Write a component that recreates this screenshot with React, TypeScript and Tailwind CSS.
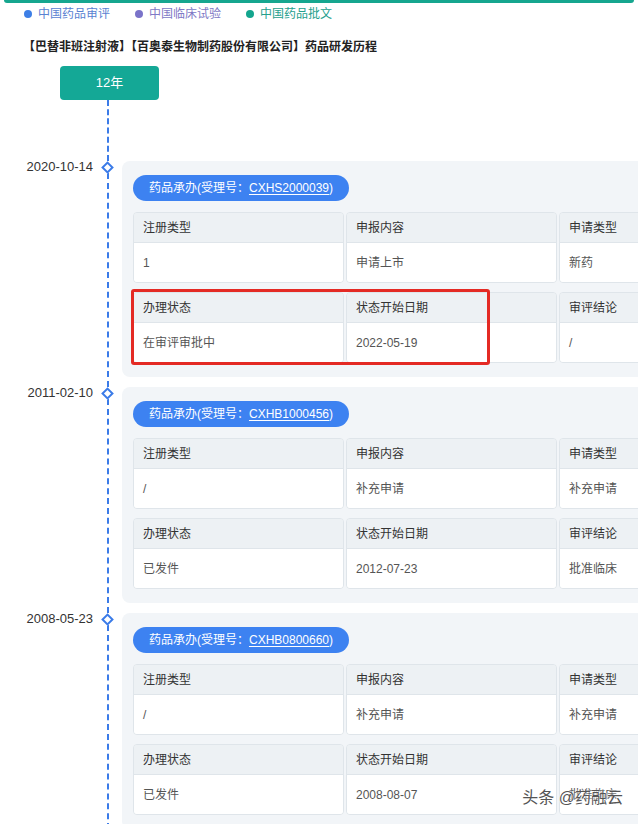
import React from 'react';

type Record = {
  date: string;
  code: string;
  row1: [string, string][];
  row2: [string, string][];
  highlight?: boolean;
};

const records: Record[] = [
  {
    date: '2020-10-14',
    code: 'CXHS2000039',
    row1: [
      ['注册类型', '1'],
      ['申报内容', '申请上市'],
      ['申请类型', '新药'],
    ],
    row2: [
      ['办理状态', '在审评审批中'],
      ['状态开始日期', '2022-05-19'],
      ['审评结论', '/'],
    ],
    highlight: true,
  },
  {
    date: '2011-02-10',
    code: 'CXHB1000456',
    row1: [
      ['注册类型', '/'],
      ['申报内容', '补充申请'],
      ['申请类型', '补充申请'],
    ],
    row2: [
      ['办理状态', '已发件'],
      ['状态开始日期', '2012-07-23'],
      ['审评结论', '批准临床'],
    ],
  },
  {
    date: '2008-05-23',
    code: 'CXHB0800660',
    row1: [
      ['注册类型', '/'],
      ['申报内容', '补充申请'],
      ['申请类型', '补充申请'],
    ],
    row2: [
      ['办理状态', '已发件'],
      ['状态开始日期', '2008-08-07'],
      ['审评结论', '批准临床'],
    ],
  },
];

const legend = [
  { label: '中国药品审评', dot: 'bg-[#3d7fe6]', text: 'text-[#5a82d2]' },
  { label: '中国临床试验', dot: 'bg-[#7a73c9]', text: 'text-[#8079c6]' },
  { label: '中国药品批文', dot: 'bg-[#14a58e]', text: 'text-[#26a08d]' },
];

function InfoRow({ cells, className }: { cells: [string, string][]; className: string }) {
  return (
    <div className={`flex gap-[2px] ${className}`}>
      {cells.map(([label, value]) => (
        <div key={label} className="w-[211px] shrink-0 overflow-hidden rounded-[4px] border border-[#dfe5ea]">
          <div className="flex h-[30px] items-center border-b border-[#dfe5ea] bg-[#edf1f4] px-[9px] text-[12px] text-[#333]">
            {label}
          </div>
          <div className="flex h-[39px] items-center bg-white px-[9px] text-[12px] text-[#555]">{value}</div>
        </div>
      ))}
    </div>
  );
}

function TimelineItem({ record }: { record: Record }) {
  return (
    <div className="flex">
      <div className="w-[93px] shrink-0 text-right text-[13px] leading-[12px] text-[#333]">{record.date}</div>
      <div className="flex w-[29px] shrink-0 flex-col items-center">
        <div className="flex h-[12px] w-[12px] items-center justify-center">
          <div className="h-[9px] w-[9px] rotate-45 border-2 border-[#3b7be8] bg-white" />
        </div>
        <div className="w-[2px] flex-1 border-l-2 border-dashed border-[#3b7be8]" />
      </div>
      <div className="pb-[10px]">
        <div className="relative w-[700px] rounded-lg bg-[#f2f5f8] pb-[14px] pl-[11px] pt-[14px]">
          <div className="flex h-[26px] w-[216px] items-center justify-center rounded-full bg-[#3d82f1] text-[12px] text-white">
            药品承办(受理号：<span className="underline underline-offset-2">{record.code}</span>)
          </div>
          <InfoRow cells={record.row1} className="mt-[11px]" />
          <InfoRow cells={record.row2} className="mt-[9px]" />
          {record.highlight && (
            <div className="absolute left-[9px] top-[128px] h-[76px] w-[359px] rounded-[3px] border-[3px] border-[#e42a24]" />
          )}
        </div>
      </div>
    </div>
  );
}

export default function App() {
  return (
    <div className="relative h-[824px] w-[638px] overflow-hidden bg-white font-['Liberation_Sans','Noto_Sans_CJK_SC',sans-serif]">
      {/* top tab border */}
      <div className="mx-[4px] h-[3px] rounded-b bg-[#16a68f]" />

      {/* legend */}
      <div className="flex h-[22px] items-center gap-[25px] pl-[24px]">
        {legend.map((item) => (
          <div key={item.label} className="flex items-center gap-[6px]">
            <span className={`h-[8px] w-[8px] rounded-full ${item.dot}`} />
            <span className={`text-[12px] ${item.text}`}>{item.label}</span>
          </div>
        ))}
      </div>

      <div className="mt-[13px] pl-[23px] text-[12px] font-bold leading-[18px] text-[#222]">
        【巴替非班注射液】【百奥泰生物制药股份有限公司】药品研发历程
      </div>

      <div className="ml-[60px] mt-[10px] flex h-[34px] w-[99px] items-center justify-center rounded-[4px] bg-[#14a896] text-[13px] text-white">
        12年
      </div>

      {/* timeline */}
      <div className="flex">
        <div className="w-[93px] shrink-0" />
        <div className="flex w-[29px] justify-center">
          <div className="h-[61px] w-[2px] border-l-2 border-dashed border-[#3b7be8]" />
        </div>
      </div>
      {records.map((r) => (
        <TimelineItem key={r.code} record={r} />
      ))}

      {/* watermark */}
      <div className="absolute bottom-[14px] right-[15px] text-[16px] text-[#555] [text-shadow:0_0_2px_#fff,0_0_2px_#fff]">
        头条 @药融云
      </div>
    </div>
  );
}
